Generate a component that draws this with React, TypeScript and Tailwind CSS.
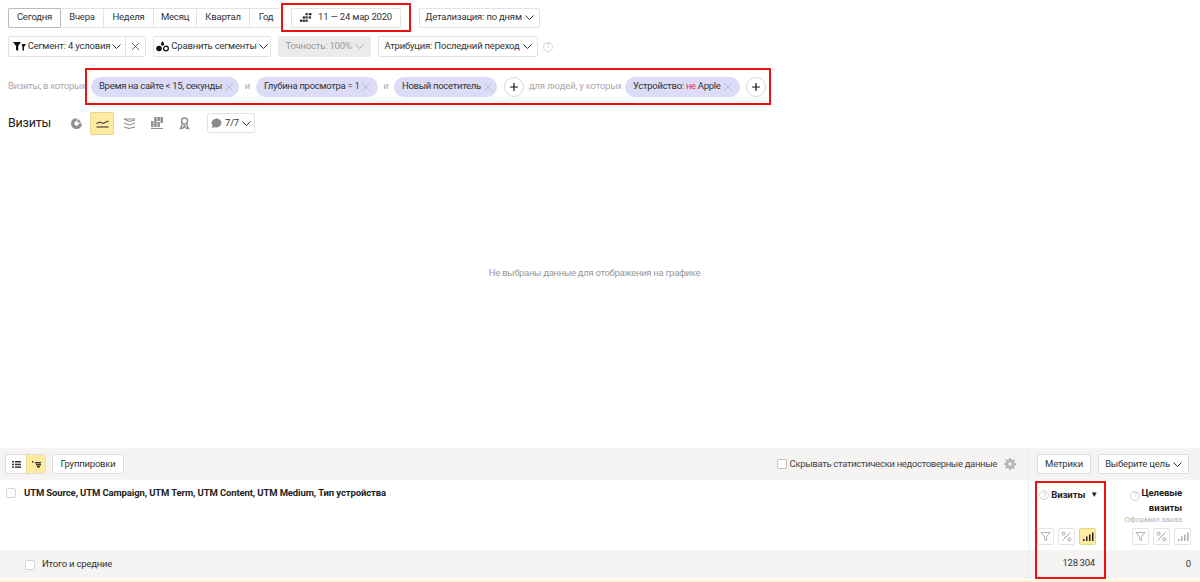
import { X, Plus } from 'lucide-react'

const font = { fontFamily: '"Roboto", "Liberation Sans", sans-serif' }

const periods = [
  { label: 'Сегодня', w: 'w-[53px]', active: true },
  { label: 'Вчера', w: 'w-[43px]' },
  { label: 'Неделя', w: 'w-[50px]' },
  { label: 'Месяц', w: 'w-[43px]' },
  { label: 'Квартал', w: 'w-[53px]' },
  { label: 'Год', w: 'w-[33px]' },
]

function Chevron({ color = '#333' }: { color?: string }) {
  return (
    <svg width="9" height="5" viewBox="0 0 9 5" fill="none" stroke={color} strokeWidth="1" className="shrink-0">
      <path d="M0.500 0.500l4 4 4-4" />
    </svg>
  )
}

function Help({ className = '' }: { className?: string }) {
  return (
    <span className={`inline-flex items-center justify-center w-[10px] h-[10px] rounded-full border border-[#d4d4d4] text-[7px] font-normal leading-none text-[#c4c4c4] shrink-0 ${className}`}>
      ?
    </span>
  )
}

function Chip({ children, width }: { children: React.ReactNode; width: string }) {
  return (
    <div className={`${width} h-[20px] rounded-full bg-[#dcdcf8] flex items-center justify-between pl-[8px] pr-[5px] text-[9.5px] tracking-[-0.3px] text-[#333] whitespace-nowrap shrink-0`}>
      <span>{children}</span>
      <X className="w-[14px] h-[14px] text-[#a5a5b5] shrink-0" strokeWidth={1} />
    </div>
  )
}

function AddButton() {
  return (
    <div className="w-[20px] h-[20px] rounded-full bg-white border border-[#d9d9d9] flex items-center justify-center shrink-0">
      <Plus className="w-[12px] h-[12px] text-[#111]" strokeWidth={2.4} />
    </div>
  )
}

function FilterIcon({ color = '#aaa' }: { color?: string }) {
  return (
    <svg width="11" height="11" viewBox="0 0 11 11" fill="none" stroke={color} strokeWidth="0.9">
      <path d="M1 1.500h9L6.600 5.600v4L4.400 8.400V5.600z" />
    </svg>
  )
}

function PercentIcon() {
  return (
    <svg width="11" height="11" viewBox="0 0 11 11" fill="none" stroke="#999" strokeWidth="0.9">
      <path d="M9.500 1.500l-8 8" />
      <circle cx="2.600" cy="2.600" r="1.500" />
      <circle cx="8.400" cy="8.400" r="1.500" />
    </svg>
  )
}

function BarsIcon({ color }: { color: string }) {
  return (
    <svg width="12" height="10" viewBox="0 0 12 10" fill={color}>
      <rect x="1" y="7" width="1.500" height="2" />
      <rect x="4" y="4.500" width="1.500" height="4.500" />
      <rect x="7" y="2.500" width="1.500" height="6.500" />
      <rect x="10" y="0.500" width="1.500" height="8.500" />
    </svg>
  )
}

function SmallTool({ active, children }: { active?: boolean; children: React.ReactNode }) {
  return (
    <div className={`w-[17px] h-[17px] rounded-[2px] border flex items-center justify-center ${active ? 'bg-[#ffeba0] border-[#e6d693]' : 'bg-white border-[#e5e5e5]'}`}>
      {children}
    </div>
  )
}

export default function App() {
  return (
    <div className="w-[1200px] h-[582px] bg-white flex flex-col overflow-hidden text-[#333] whitespace-nowrap" style={font}>
      {/* Period row */}
      <div className="flex items-center pl-[8px] h-[29px] mt-[3px] text-[9.5px] tracking-[-0.2px]">
        <div className="flex h-[20px] w-[275px]">
          {periods.map((p) => (
            <div key={p.label} className={`${p.w} flex items-center justify-center border-y border-r rounded-[1px] ${p.active ? 'border-[#bbb] border-l' : 'border-[#e3e3e3]'}`}>
              {p.label}
            </div>
          ))}
        </div>
        <div className="ml-[-2px] w-[130px] h-[29px] border-2 border-[#ee1111] flex items-center justify-center">
          <div className="w-[110px] h-[20px] border border-[#e3e3e3] rounded-[2px] flex items-center justify-center gap-[6px]">
            <svg width="12" height="10" viewBox="0 0 11 9" fill="#222">
              <rect x="5" y="0" width="2" height="2" />
              <rect x="8" y="0" width="2.500" height="2" />
              <rect x="2.500" y="3" width="2" height="2" />
              <rect x="5" y="3" width="2" height="2" />
              <rect x="8" y="3" width="2" height="2" />
              <rect x="0" y="6" width="2" height="2" />
              <rect x="2.500" y="6" width="2" height="2" />
              <rect x="5" y="6" width="2" height="2" />
            </svg>
            11 — 24 мар 2020
          </div>
        </div>
        <div className="ml-[8px] w-[121px] h-[20px] border border-[#e3e3e3] rounded-[2px] flex items-center justify-center gap-[3px]">
          Детализация: по дням <Chevron />
        </div>
      </div>

      {/* Segment row */}
      <div className="flex items-center pl-[8px] mt-[4px] h-[21px] text-[9.5px] tracking-[-0.2px]">
        <div className="flex h-[21px] w-[138px] border border-[#e3e3e3] rounded-[2px]">
          <div className="w-[117px] flex items-center justify-center gap-[2px] border-r border-[#e3e3e3]">
            <svg width="13" height="11" viewBox="0 0 13 11" fill="#111" className="shrink-0">
              <path d="M0 1h8L5.200 5v5L3 8.800V5z" />
              <path d="M8.500 3H13l-2 3v4L9.500 9V6z" />
            </svg>
            Сегмент: 4 условия <Chevron />
          </div>
          <div className="flex-1 flex items-center justify-center">
            <X className="w-[13px] h-[13px] text-[#222]" strokeWidth={1.3} />
          </div>
        </div>
        <div className="ml-[7px] w-[118px] h-[21px] border border-[#e3e3e3] rounded-[2px] flex items-center justify-center gap-[2px]">
          <svg width="13" height="11" viewBox="0 0 13 11" fill="#111" className="shrink-0">
            <path d="M6.500 0l1.500 2.500a1.600 1.600 0 1 1-3 0z" />
            <circle cx="3" cy="7.500" r="2.800" />
            <circle cx="10" cy="7.500" r="2.300" fill="none" stroke="#111" strokeWidth="1.300" />
          </svg>
          Сравнить сегменты <Chevron />
        </div>
        <div className="ml-[7px] w-[93px] h-[21px] bg-[#ebebeb] rounded-[2px] flex items-center justify-center gap-[3px] text-[#999]">
          Точность: 100% <Chevron color="#aaa" />
        </div>
        <div className="ml-[7px] w-[160px] h-[21px] border border-[#e3e3e3] rounded-[2px] flex items-center justify-center gap-[3px]">
          Атрибуция: Последний переход <Chevron />
        </div>
        <Help className="ml-[5px]" />
      </div>

      {/* Segment conditions */}
      <div className="flex items-center pl-[8px] mt-[11px] h-[37px] text-[9.5px] tracking-[-0.2px] text-[#aaa]">
        <span className="w-[77px] tracking-[-0.35px]">Визиты, в которых</span>
        <div className="w-[686px] h-[37px] border-2 border-[#ee1111] flex items-center pl-[4px]">
          <Chip width="w-[148px]">Время на сайте &lt; 15, секунды</Chip>
          <span className="w-[17px] text-center">и</span>
          <Chip width="w-[122px]">Глубина просмотра = 1</Chip>
          <span className="w-[16px] text-center">и</span>
          <Chip width="w-[103px]">Новый посетитель</Chip>
          <div className="ml-[7px]"><AddButton /></div>
          <span className="ml-[5px] w-[96px]">для людей, у которых</span>
          <Chip width="w-[115px]">
            Устройство: <span className="text-[#e8304f]">не</span> Apple
          </Chip>
          <div className="ml-[6px]"><AddButton /></div>
        </div>
      </div>

      {/* Chart toolbar */}
      <div className="flex items-center pl-[8px] mt-[6px] h-[24px]">
        <span className="w-[54px] text-[12.500px] tracking-[-0.2px] text-[#222]">Визиты</span>
        <div className="w-[28px] flex justify-center">
          <svg width="11" height="11" viewBox="0 0 11 11" fill="#8f8f8f">
            <path d="M5.500 0a5.500 5.500 0 1 0 5.500 5.500H7.800A2.300 2.300 0 1 1 5.500 3.200z" />
            <path d="M6.500 0.500L10.500 4.500H6.500z" />
          </svg>
        </div>
        <div className="w-[24px] h-[23px] rounded-[2px] bg-[#ffeba0] border border-[#e6d693] flex items-center justify-center">
          <svg width="13" height="9" viewBox="0 0 13 9" fill="none" stroke="#333" strokeWidth="1.100">
            <path d="M0.500 4.500L4 3l3 1.500L12.500 2" />
            <path d="M0.500 8h12" />
          </svg>
        </div>
        <div className="w-[31px] flex justify-center">
          <svg width="13" height="11" viewBox="0 0 13 11" fill="none" stroke="#8f8f8f" strokeWidth="1.100">
            <path d="M1 1h11M1 1l5 2.500L12 2M1 5l5 2 6-2M1 9l5 1.500L12 9" />
          </svg>
        </div>
        <div className="w-[23px] flex justify-center">
          <svg width="12" height="12" viewBox="0 0 12 12" fill="#8f8f8f">
            <rect x="0" y="4" width="2.500" height="6" />
            <rect x="3.200" y="0" width="2.500" height="10" />
            <rect x="6.400" y="0" width="2.500" height="4" />
            <rect x="6.400" y="5" width="2.500" height="5" />
            <rect x="9.500" y="0" width="2.500" height="6" />
            <rect x="0" y="11" width="12" height="1" />
          </svg>
        </div>
        <div className="w-[32px] flex justify-center">
          <svg width="11" height="13" viewBox="0 0 11 13" fill="none" stroke="#8f8f8f" strokeWidth="1.500">
            <circle cx="5.500" cy="4" r="3" />
            <path d="M3.500 7L1.500 11.500 4 11l1.500-2L7 11l2.500.5L7.500 7" />
          </svg>
        </div>
        <div className="ml-[7px] w-[48px] h-[20px] border border-[#e3e3e3] rounded-[2px] flex items-center justify-center gap-[3px] text-[9.5px] tracking-[-0.2px]">
          <svg width="11" height="11" viewBox="0 0 11 11" fill="#8a8a8a">
            <path d="M5.500 0.500a5 4.500 0 1 1-2.400 8.500L0.800 10.500l0.800-2.800A5 4.500 0 0 1 5.500 0.500z" />
          </svg>
          7/7 <Chevron />
        </div>
      </div>

      {/* Empty chart */}
      <div className="flex-1 flex items-center justify-center pb-[37px]">
        <span className="text-[9.5px] tracking-[-0.3px] text-[#9a9a9a] mr-[11px]">Не выбраны данные для отображения на графике</span>
      </div>

      {/* Table toolbar */}
      <div className="h-[32px] bg-[#f5f4f2] flex items-center text-[9.5px] tracking-[-0.2px]">
        <div className="flex items-center pl-[5px] flex-1">
          <div className="flex h-[20px] w-[41px] bg-white border border-[#ddd] rounded-[2px]">
            <div className="w-[20px] flex items-center justify-center">
              <svg width="9" height="7" viewBox="0 0 9 7" fill="#333">
                <rect x="0" y="0" width="2" height="1.500" />
                <rect x="3" y="0" width="6" height="1.500" />
                <rect x="0" y="2.700" width="2" height="1.500" />
                <rect x="3" y="2.700" width="6" height="1.500" />
                <rect x="0" y="5.400" width="2" height="1.500" />
                <rect x="3" y="5.400" width="6" height="1.500" />
              </svg>
            </div>
            <div className="flex-1 bg-[#ffeba0] border-l border-[#e6d693] rounded-r-[2px] flex items-center justify-center">
              <svg width="9" height="7" viewBox="0 0 9 7" fill="#333">
                <rect x="0" y="0" width="1.500" height="1.500" />
                <rect x="3" y="1" width="6" height="1.500" />
                <rect x="4" y="3" width="5" height="1.500" />
                <rect x="5" y="5" width="3" height="1.500" />
              </svg>
            </div>
          </div>
          <div className="ml-[6px] w-[72px] h-[20px] bg-white border border-[#ddd] rounded-[2px] flex items-center justify-center">
            Группировки
          </div>
          <div className="ml-auto flex items-center gap-[3px] text-[#444] tracking-[-0.32px]">
            <div className="w-[10px] h-[10px] bg-white border border-[#c4c4c4] rounded-[2px]" />
            Скрывать статистически недостоверные данные
          </div>
          <svg className="ml-[7px] mr-[12px]" width="12" height="12" viewBox="0 0 12 12" fill="#b5b5b5">
            <path d="M5 0h2l.3 1.700 1.300.5L10 1.200l1 1-1 1.500.5 1.300 1.500.3v2l-1.700.3-.5 1.300 1 1.400-1 1-1.400-1-1.300.5L7 12H5l-.3-1.700-1.300-.5-1.400 1-1-1 1-1.400-.5-1.300L0 7V5l1.700-.3.5-1.300-1-1.500 1-1 1.400 1 1.300-.5z" />
            <circle cx="6" cy="6" r="1.800" fill="#f5f4f2" />
          </svg>
        </div>
        <div className="w-[172px] h-full border-l border-[#e8e8e8] flex items-center pl-[8px]">
          <div className="w-[54px] h-[20px] bg-white border border-[#ddd] rounded-[2px] flex items-center justify-center">Метрики</div>
          <div className="ml-[7px] w-[91px] h-[20px] bg-white border border-[#ddd] rounded-[2px] flex items-center justify-center gap-[3px]">
            Выберите цель <Chevron />
          </div>
        </div>
      </div>

      {/* Table head */}
      <div className="h-[70px] flex">
        <div className="flex-1 flex items-start pl-[6px] pt-[8px]">
          <div className="w-[10px] h-[10px] border border-[#d4d4d4] rounded-[2px] mr-[8px] shrink-0" />
          <span className="text-[9.5px] tracking-[-0.12px] font-bold text-[#222] leading-[10px]">
            UTM Source, UTM Campaign, UTM Term, UTM Content, UTM Medium, Тип устройства
          </span>
        </div>
        <div className="w-[172px] flex border-l border-[#f0f0f0]">
          <div className="mt-[1px] ml-[6px] w-[71px] h-[69px] border-2 border-b-0 border-[#ee1111] flex flex-col pt-[5px] pr-[6px]">
            <div className="flex items-center justify-end text-[9.5px] tracking-[-0.1px] font-bold text-[#222]">
              <Help className="mr-[2px]" />
              Визиты
              <span className="ml-[5px] text-[8px]">▼</span>
            </div>
            <div className="mt-auto mb-[5px] flex gap-[4px] justify-end mr-[2px]">
              <SmallTool><FilterIcon /></SmallTool>
              <SmallTool><PercentIcon /></SmallTool>
              <SmallTool active><BarsIcon color="#222" /></SmallTool>
            </div>
          </div>
          <div className="flex-1 flex flex-col items-end pt-[6px] pr-[9px]">
            <div className="mr-[9px] text-[9.5px] tracking-[-0.1px] font-bold text-[#222] leading-[13px] text-right">
              <Help className="mr-[1px] align-[-1px]" />Целевые<br />визиты
            </div>
            <div className="mr-[9px] text-[8px] text-[#b5b5b5] tracking-[-0.1px]">Оформил заказ</div>
            <div className="mt-auto mb-[5px] flex gap-[4px]">
              <SmallTool><FilterIcon /></SmallTool>
              <SmallTool><PercentIcon /></SmallTool>
              <SmallTool><BarsIcon color="#aaa" /></SmallTool>
            </div>
          </div>
        </div>
      </div>

      {/* Totals */}
      <div className="h-[29px] bg-[#f5f4f2] flex text-[9.5px] tracking-[-0.2px]">
        <div className="flex-1 flex items-center pl-[25px]">
          <div className="w-[10px] h-[10px] bg-white border border-[#d4d4d4] rounded-[2px] mr-[7px]" />
          Итого и средние
        </div>
        <div className="w-[172px] flex border-l border-[#e8e8e8]">
          <div className="ml-[6px] w-[71px] border-2 border-t-0 border-[#ee1111] flex items-center justify-end pr-[9px]">128{'\u2009'}304</div>
          <div className="flex-1 flex items-center justify-end pr-[9px]">0</div>
        </div>
      </div>
      <div className="h-[2px] mt-[1px] bg-[#fdf3cf]" />
    </div>
  )
}
